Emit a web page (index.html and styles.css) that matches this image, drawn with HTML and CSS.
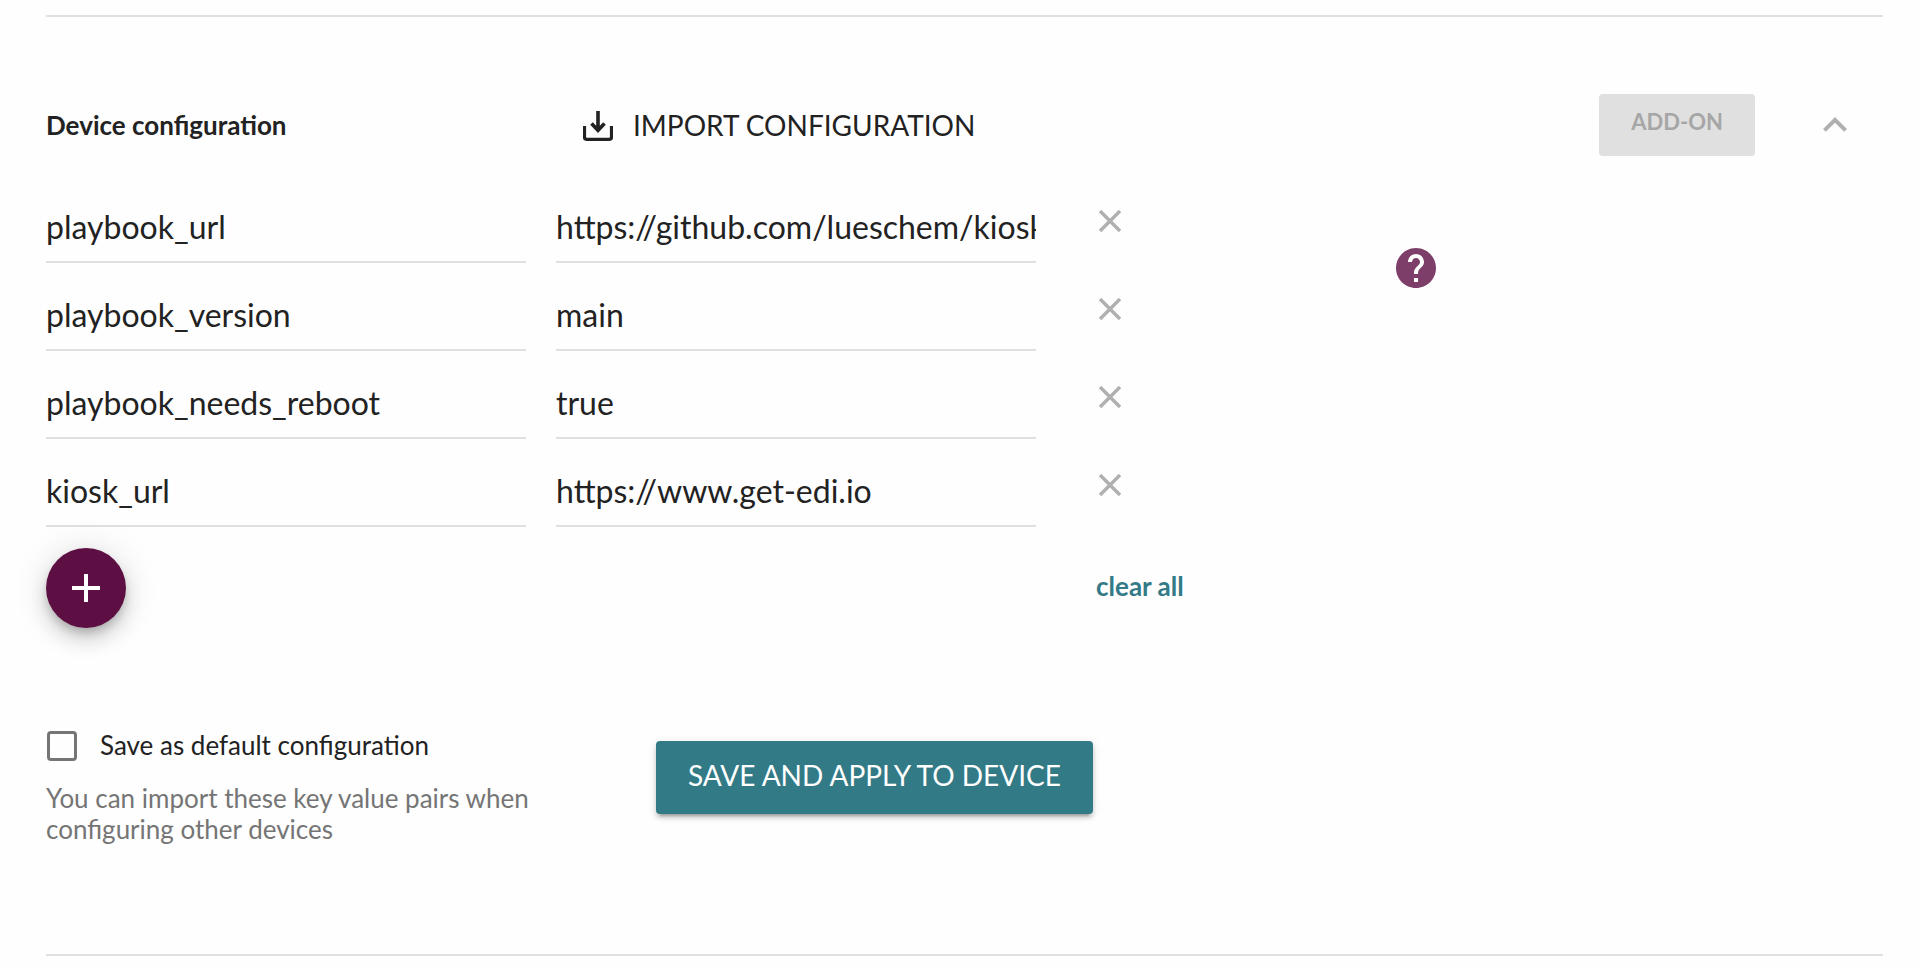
FILE: index.html
```html
<!DOCTYPE html>
<html lang="en">
<head>
<meta charset="utf-8">
<title>Device configuration</title>
<link rel="stylesheet" href="styles.css">
</head>
<body>
<main class="page">
  <section class="panel">
    <header class="panel-header">
      <h4 class="title">Device configuration</h4>
      <button class="import" type="button">
        <svg class="import-icon" viewBox="0 0 30 30" aria-hidden="true"><path d="M1.500 15v11q0 2.300 2.300 2.300h22.400q2.300 0 2.300-2.300V15" fill="none" stroke="currentColor" stroke-width="3.200"/><path d="M15 0v19M8.500 12.500l6.500 6.800 6.500-6.800" fill="none" stroke="currentColor" stroke-width="3.600"/></svg>
        <span>IMPORT CONFIGURATION</span>
      </button>
      <span class="addon">ADD-ON</span>
      <button class="icon-button collapse" type="button" aria-label="Collapse">
        <svg class="icon" viewBox="0 0 24 24" aria-hidden="true"><path fill="currentColor" d="M12 8l-6 6 1.410 1.410L12 10.830l4.590 4.580L18 14z"/></svg>
      </button>
    </header>

    <div class="editor">
      <form class="pairs">
        <div class="pair">
          <input class="field" type="text" aria-label="Key" value="playbook_url">
          <input class="field" type="text" aria-label="Value" value="https://github.com/lueschem/kiosk-playbook.git">
          <button class="icon-button remove" type="button" aria-label="Remove"><svg class="cross" viewBox="0 0 24 24" aria-hidden="true"><path d="M2 2l20 20M22 2L2 22"/></svg></button>
        </div>
        <div class="pair">
          <input class="field" type="text" aria-label="Key" value="playbook_version">
          <input class="field" type="text" aria-label="Value" value="main">
          <button class="icon-button remove" type="button" aria-label="Remove"><svg class="cross" viewBox="0 0 24 24" aria-hidden="true"><path d="M2 2l20 20M22 2L2 22"/></svg></button>
        </div>
        <div class="pair">
          <input class="field" type="text" aria-label="Key" value="playbook_needs_reboot">
          <input class="field" type="text" aria-label="Value" value="true">
          <button class="icon-button remove" type="button" aria-label="Remove"><svg class="cross" viewBox="0 0 24 24" aria-hidden="true"><path d="M2 2l20 20M22 2L2 22"/></svg></button>
        </div>
        <div class="pair">
          <input class="field" type="text" aria-label="Key" value="kiosk_url">
          <input class="field" type="text" aria-label="Value" value="https://www.get-edi.io">
          <button class="icon-button remove" type="button" aria-label="Remove"><svg class="cross" viewBox="0 0 24 24" aria-hidden="true"><path d="M2 2l20 20M22 2L2 22"/></svg></button>
        </div>
        <div class="pair-actions">
          <button class="fab" type="button" aria-label="Add"><svg class="icon" viewBox="0 0 24 24" aria-hidden="true"><path fill="currentColor" d="M19 13h-6v6h-2v-6H5v-2h6V5h2v6h6v2z"/></svg></button>
          <a class="clear" href="#">clear all</a>
        </div>
      </form>
      <button class="icon-button help" type="button" aria-label="Help">
        <svg class="icon" viewBox="0 0 24 24" aria-hidden="true"><path fill="currentColor" d="M12 2C6.480 2 2 6.480 2 12s4.480 10 10 10 10-4.480 10-10S17.520 2 12 2zm1 17h-2v-2h2v2zm2.070-7.750l-.9.920C13.450 12.900 13 13.500 13 15h-2v-.5c0-1.100.45-2.100 1.170-2.830l1.240-1.260c.37-.36.59-.86.59-1.410 0-1.100-.9-2-2-2s-2 .9-2 2H8c0-2.210 1.790-4 4-4s4 1.790 4 4c0 .88-.36 1.680-.93 2.250z"/></svg>
      </button>
    </div>

    <div class="footer">
      <div class="default">
        <label class="check"><input class="checkbox" type="checkbox"><span>Save as default configuration</span></label>
        <p class="hint">You can import these key value pairs when configuring other devices</p>
      </div>
      <button class="submit" type="button">SAVE AND APPLY TO DEVICE</button>
    </div>
  </section>
</main>
</body>
</html>
```
FILE: styles.css
```css
* {
  box-sizing: border-box;
}

body {
  margin: 0;
  background: #fefefe;
  color: #222;
  font-family: Lato, "Liberation Sans", sans-serif;
  font-size: 26px;
}

button,
input {
  font-family: inherit;
  color: inherit;
}

button {
  margin: 0;
  padding: 0;
  border: 0;
  background: none;
  cursor: pointer;
}

svg {
  display: block;
}

.page {
  padding: 15px 37px 12px 46px;
}

.panel {
  border-top: 2px solid #e0e0e0;
  border-bottom: 2px solid #e0e0e0;
  padding: 77px 0 109px;
}

.panel-header {
  display: flex;
  align-items: center;
  height: 62px;
}

.title {
  flex: none;
  width: 537px;
  margin: 0;
  font-size: 26px;
  font-weight: 700;
}

.import {
  display: flex;
  align-items: center;
  gap: 20px;
  padding-top: 2px;
  font-size: 28px;
}

.import-icon {
  width: 30px;
  height: 30px;
}

.import span {
  padding-bottom: 2px;
}

.addon {
  margin-left: auto;
  padding: 14px 32px 20px;
  border-radius: 4px;
  background: #e0e0e0;
  color: #a6a6a6;
  font-size: 22px;
  line-height: 28px;
  font-weight: 700;
}

.icon {
  width: 48px;
  height: 48px;
}

.collapse {
  margin: 0 24px 0 56px;
  color: #b0b0b0;
}

.editor {
  display: flex;
  align-items: flex-start;
}

.pairs {
  width: 1190px;
  padding-top: 38px;
}

.pair {
  display: grid;
  grid-template-columns: 480px 480px auto;
  column-gap: 30px;
  height: 88px;
  justify-content: start;
  align-items: start;
}

.field {
  width: 100%;
  height: 69px;
  padding: 0 0 2px;
  border: 0;
  border-bottom: 2px solid #e0e0e0;
  border-radius: 0;
  outline: 0;
  background: none;
  font-size: 32px;
}

.remove {
  padding: 15px 0 0 32px;
}

.cross {
  width: 24px;
  height: 24px;
  fill: none;
  stroke: #b0b0b0;
  stroke-width: 3.4;
}

.pair-actions {
  display: flex;
  align-items: center;
  gap: 970px;
  padding-top: 2px;
}

.fab {
  display: grid;
  place-items: center;
  width: 80px;
  height: 80px;
  border-radius: 50%;
  background: #5d0f43;
  color: #fff;
  box-shadow: 0 6px 10px -2px rgba(0, 0, 0, 0.2), 0 12px 20px rgba(0, 0, 0, 0.14), 0 2px 36px rgba(0, 0, 0, 0.12);
}

.clear {
  padding-bottom: 4px;
  color: #337a87;
  font-weight: 700;
  text-decoration: none;
}

.help {
  margin: 88px 0 0 156px;
  color: #7d3f69;
}

.footer {
  display: flex;
  align-items: flex-start;
  gap: 110px;
  padding-top: 97px;
}

.default {
  width: 500px;
}

.check {
  display: flex;
  align-items: center;
  gap: 23px;
  height: 42px;
}

.check span {
  padding-bottom: 2px;
}

.checkbox {
  appearance: none;
  width: 30px;
  height: 30px;
  margin: 0 0 0 1px;
  border: 3px solid #757575;
  border-radius: 4px;
}

.hint {
  margin: 16px 0 0;
  color: #757575;
  line-height: 31px;
}

.submit {
  margin-top: 16px;
  padding: 0 32px 6px;
  height: 73px;
  border-radius: 4px;
  background: #337a87;
  color: #fff;
  font-size: 28px;
  box-shadow: 0 6px 2px -4px rgba(0, 0, 0, 0.2), 0 4px 4px rgba(0, 0, 0, 0.14), 0 2px 10px rgba(0, 0, 0, 0.12);
}
```
